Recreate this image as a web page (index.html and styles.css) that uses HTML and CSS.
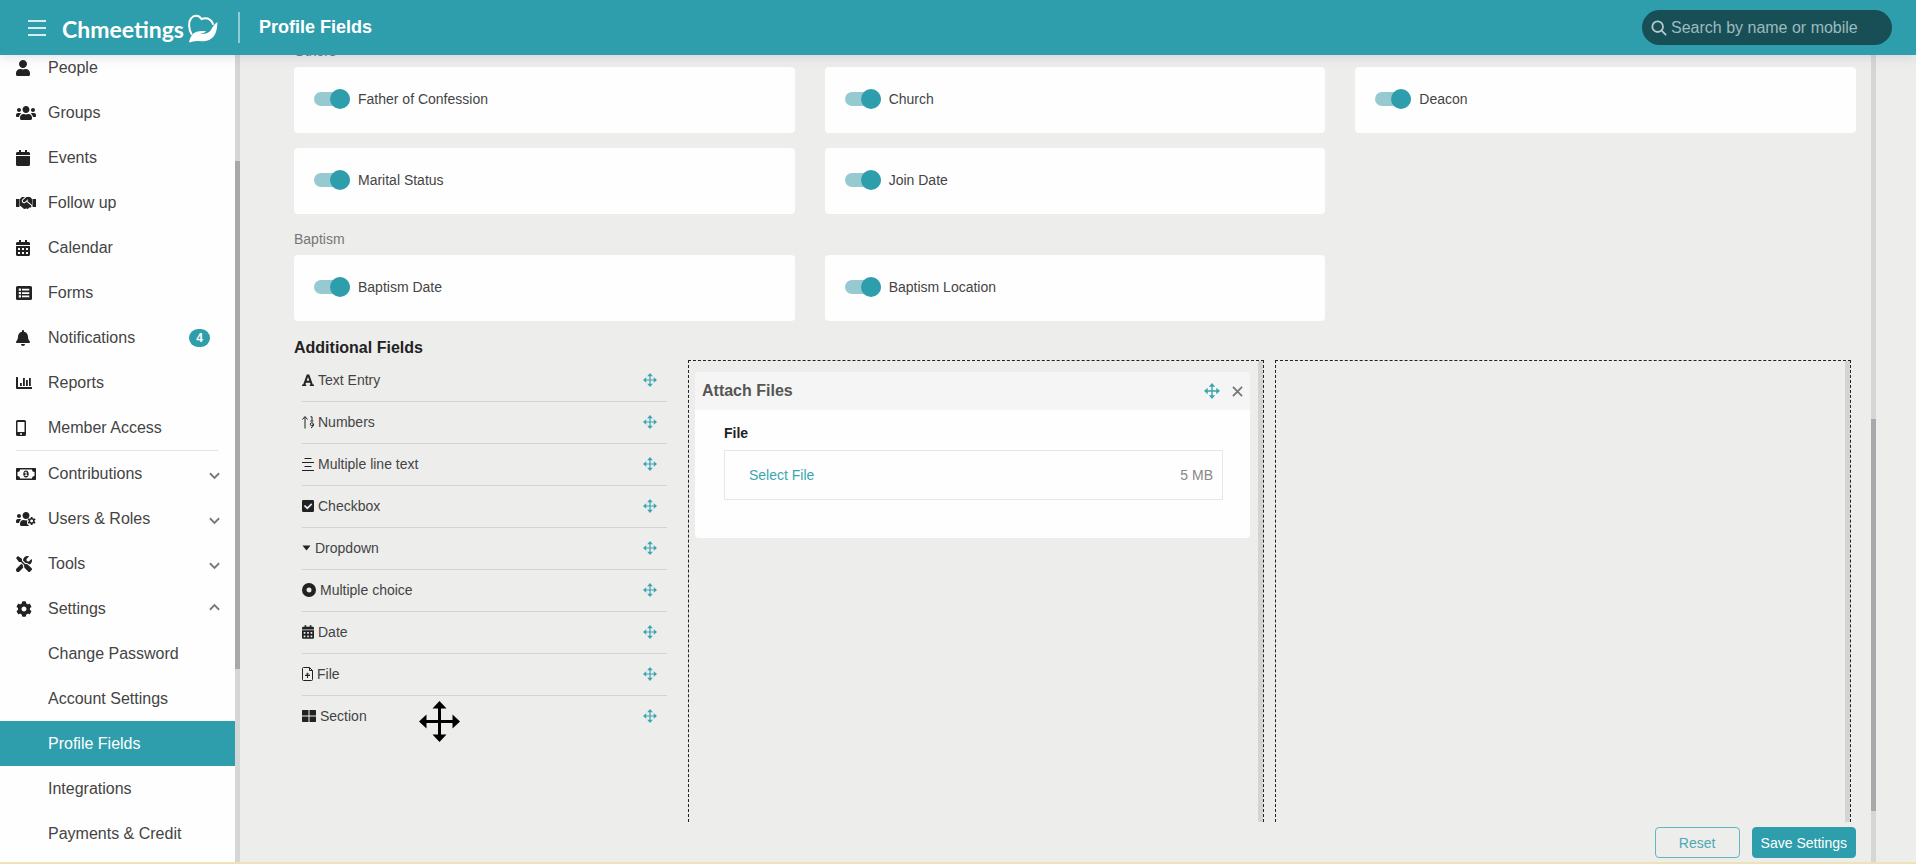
FILE: index.html
```html
<!DOCTYPE html>
<html lang="en">

<head>
    <meta charset="UTF-8">
    <meta name="viewport" content="width=device-width, initial-scale=1.0">
    <title>Profile Fields - Chmeetings</title>
    <link rel="stylesheet" href="styles.css">
</head>

<body>
    <!-- Icon sprite -->
    <svg class="sprite" aria-hidden="true">
        <symbol id="i-user" viewBox="0 0 448 512"><path d="M224 256c70.700 0 128-57.300 128-128S294.700 0 224 0 96 57.300 96 128s57.300 128 128 128zm89.600 32h-16.700c-22.200 10.200-46.900 16-72.900 16s-50.600-5.800-72.900-16h-16.700C60.200 288 0 348.200 0 422.400V464c0 26.500 21.500 48 48 48h352c26.500 0 48-21.500 48-48v-41.600c0-74.200-60.200-134.400-134.400-134.400z"/></symbol>
        <symbol id="i-users" viewBox="0 0 640 512"><path d="M96 224c35.300 0 64-28.700 64-64s-28.700-64-64-64-64 28.700-64 64 28.700 64 64 64zm448 0c35.300 0 64-28.700 64-64s-28.700-64-64-64-64 28.700-64 64 28.700 64 64 64zm32 32h-64c-17.600 0-33.500 7.100-45.100 18.600 40.300 22.100 68.900 62 75.100 109.400h66c17.700 0 32-14.300 32-32v-32c0-35.300-28.700-64-64-64zm-256 0c61.900 0 112-50.100 112-112S381.900 32 320 32 208 82.100 208 144s50.100 112 112 112zm76.800 32h-8.300c-20.800 10-43.900 16-68.500 16s-47.600-6-68.500-16h-8.300C179.600 288 128 339.600 128 403.200V432c0 26.500 21.500 48 48 48h288c26.500 0 48-21.500 48-48v-28.800c0-63.600-51.600-115.200-115.200-115.200zm-223.700-13.400C161.500 263.100 145.600 256 128 256H64c-35.300 0-64 28.700-64 64v32c0 17.700 14.300 32 32 32h65.900c6.300-47.400 34.900-87.300 75.200-109.400z"/></symbol>
        <symbol id="i-calendar" viewBox="0 0 448 512"><path d="M12 192h424c6.600 0 12 5.400 12 12v260c0 26.500-21.500 48-48 48H48c-26.500 0-48-21.500-48-48V204c0-6.600 5.400-12 12-12zm436-44v-36c0-26.500-21.500-48-48-48h-48V12c0-6.600-5.400-12-12-12h-40c-6.600 0-12 5.400-12 12v52H160V12c0-6.600-5.400-12-12-12h-40c-6.600 0-12 5.400-12 12v52H48C21.500 64 0 85.500 0 112v36c0 6.600 5.400 12 12 12h424c6.600 0 12-5.400 12-12z"/></symbol>
        <symbol id="i-calendar-alt" viewBox="0 0 448 512"><path fill-rule="evenodd" d="M0 192h448v272c0 26.500-21.500 48-48 48H48c-26.500 0-48-21.500-48-48zM64 256v64h64v-64zM192 256v64h64v-64zM320 256v64h64v-64zM64 384v64h64v-64zM192 384v64h64v-64zM320 384v64h64v-64zM448 160v-48c0-26.500-21.500-48-48-48h-48V12c0-6.600-5.400-12-12-12h-40c-6.600 0-12 5.400-12 12v52H160V12c0-6.600-5.400-12-12-12h-40c-6.600 0-12 5.400-12 12v52H48C21.500 64 0 85.500 0 112v48z"/></symbol>
        <symbol id="i-handshake" viewBox="0 0 640 512"><path d="M434.700 64h-85.900c-8 0-15.700 3-21.600 8.400l-98.300 90c-.1.1-.2.3-.3.4-16.600 15.600-16.300 40.500-2.100 56 12.700 13.900 39.400 17.600 56.100 2.700.1-.1.3-.1.4-.2l79.900-73.200c6.500-5.900 16.700-5.500 22.600 1 6 6.500 5.500 16.600-1 22.600l-26.100 23.900L504 313.800c2.900 2.400 5.500 5 7.900 7.700V128l-54.600-54.600c-5.900-6-14.100-9.400-22.600-9.400zM526 128.200v223.900c0 17.700 14.300 32 32 32h82V128.200H526zM0 384h82c17.700 0 32-14.300 32-32V128.200H0V384zm483.900-45.300L334.600 217.500l-30 27.500c-29.700 27.100-75.200 24.500-101.700-4.400-26.900-29.400-24.800-74.900 4.400-101.700L289.100 64h-83.800c-8.500 0-16.600 3.400-22.600 9.400L128 128v223.900h18.300l90.500 81.900c27.400 22.300 67.700 18.100 90-9.300l.2-.2 17.900 15.500c15.900 13 39.400 10.500 52.300-5.400l31.400-38.600 5.400 4.400c13.700 11.100 33.900 9.100 45-4.700l9.500-11.700c11.200-13.800 9.100-33.900-4.600-45.100z"/></symbol>
        <symbol id="i-list" viewBox="0 0 512 512"><path fill-rule="evenodd" d="M48 32h416a48 48 0 0 1 48 48v352a48 48 0 0 1-48 48H48a48 48 0 0 1-48-48V80a48 48 0 0 1 48-48zM88 112h72v72H88zM192 120h232v56H192zM88 220h72v72H88zM192 228h232v56H192zM88 328h72v72H88zM192 336h232v56H192z"/></symbol>
        <symbol id="i-bell" viewBox="0 0 448 512"><path d="M224 512c35.320 0 63.970-28.650 63.970-64H160.030c0 35.350 28.650 64 63.970 64zm215.390-149.710c-19.320-20.760-55.470-51.990-55.470-154.290 0-77.700-54.480-139.900-127.940-155.160V32c0-17.670-14.320-32-31.980-32s-31.980 14.330-31.980 32v20.840C118.560 68.100 64.080 130.300 64.080 208c0 102.300-36.150 133.530-55.470 154.290-6 6.450-8.660 14.160-8.610 21.710.11 16.400 12.980 32 32.100 32h383.800c19.120 0 32-15.600 32.100-32 .05-7.550-2.610-15.270-8.610-21.710z"/></symbol>
        <symbol id="i-chart" viewBox="0 0 512 512"><path d="M0 76q0-12 12-12h40q12 0 12 12v308h436q12 0 12 12v40q0 12-12 12H32q-32 0-32-32zM128 256h58v96h-58zM224 96h58v256h-58zM320 160h58v192h-58zM416 96h58v256h-58z"/></symbol>
        <symbol id="i-mobile" viewBox="0 0 320 512"><path fill-rule="evenodd" d="M48 0h224a48 48 0 0 1 48 48v416a48 48 0 0 1-48 48H48a48 48 0 0 1-48-48V48A48 48 0 0 1 48 0zM48 60v324h224V60zM160 480a32 32 0 1 0 0-64 32 32 0 0 0 0 64z"/></symbol>
        <symbol id="i-money" viewBox="0 0 640 512"><path fill-rule="evenodd" d="M24 64h592q24 0 24 24v336q0 24-24 24H24q-24 0-24-24V88q0-24 24-24zM128 112a80 80 0 0 1-80 80v128a80 80 0 0 1 80 80h384a80 80 0 0 1 80-80V192a80 80 0 0 1-80-80zM320 144c53 0 88 50 88 112s-35 112-88 112-88-50-88-112 35-112 88-112zm-48 152v24h96v-24h-28V184h-30l-38 20v24l32-10v78z"/></symbol>
        <symbol id="i-users-cog" viewBox="0 0 640 512"><path d="M96 224c35.300 0 64-28.700 64-64s-28.700-64-64-64-64 28.700-64 64 28.700 64 64 64zM320 256c61.900 0 112-50.100 112-112S381.900 32 320 32 208 82.100 208 144s50.100 112 112 112zM173 274.600C161.500 263.100 145.600 256 128 256H64c-35.300 0-64 28.700-64 64v32c0 17.700 14.300 32 32 32h65.900c6.300-47.400 34.900-87.300 75.100-109.400zM365 290c-14 8-29 14-45 14-24 0-48-6-68-16h-9C180 288 128 340 128 403v29c0 26 21 48 48 48h254c-50-30-80-60-80-110 0-30 5-55 15-80z"/><path fill-rule="evenodd" d="M474 192h52l8 42 24 13 41-15 26 45-32 29v28l32 29-26 45-41-15-24 13-8 42h-52l-8-42-24-13-41 15-26-45 32-29v-28l-32-29 26-45 41 15 24-13zm26 82a46 46 0 1 0 0 92 46 46 0 0 0 0-92z"/></symbol>
        <symbol id="i-tools" viewBox="0 0 512 512"><path d="M501.100 395.700L384 278.600c-23.100-23.100-57.600-27.600-85.400-13.900L192 158.100V96L64 0 0 64l96 128h62.100l106.600 106.600c-13.600 27.800-9.200 62.300 13.900 85.400l117.100 117.100c14.600 14.600 38.200 14.600 52.700 0l52.700-52.700c14.500-14.600 14.500-38.200 0-52.700zM331.700 225c28.300 0 54.900 11 74.900 31l19.400 19.400c15.800-6.900 30.800-16.500 43.800-29.500 37.100-37.100 49.700-89.300 37.900-136.700-2.200-9-13.500-12.100-20.100-5.500l-74.400 74.400-67.900-11.300L334 98.900l74.400-74.400c6.600-6.600 3.400-17.900-5.700-20.200-47.400-11.700-99.600.9-136.600 37.900-28.500 28.500-41.900 66.100-41.200 103.600l82.100 82.100c8.100-1.900 16.500-2.900 24.700-2.900zm-103.900 82l-56.700-56.700L18.700 402.800c-25 25-25 65.500 0 90.500s65.500 25 90.500 0l123.600-123.600c-7.600-19.900-9.900-41.600-5-62.700z"/></symbol>
        <symbol id="i-cog" viewBox="0 0 512 512"><path d="M487.400 315.700l-42.600-24.600c4.300-23.200 4.300-47 0-70.200l42.600-24.600c4.900-2.800 7.100-8.600 5.500-14-11.100-35.600-30-67.800-54.700-94.600-3.800-4.100-10-5.100-14.800-2.300L380.800 110c-17.900-15.400-38.500-27.300-60.800-35.100V25.800c0-5.600-3.900-10.500-9.400-11.700-36.700-8.200-74.300-7.800-109.200 0-5.500 1.200-9.400 6.100-9.400 11.700V75c-22.200 7.900-42.800 19.800-60.800 35.100L88.700 85.500c-4.900-2.800-11-1.900-14.800 2.300-24.700 26.700-43.600 58.900-54.700 94.600-1.700 5.400.6 11.200 5.500 14L67.300 221c-4.300 23.200-4.300 47 0 70.200l-42.600 24.600c-4.900 2.800-7.100 8.600-5.500 14 11.100 35.600 30 67.800 54.700 94.600 3.800 4.100 10 5.100 14.800 2.300l42.600-24.600c17.900 15.400 38.500 27.300 60.800 35.100v49.200c0 5.600 3.900 10.500 9.400 11.700 36.700 8.200 74.300 7.800 109.200 0 5.500-1.200 9.400-6.100 9.400-11.700v-49.200c22.200-7.900 42.800-19.800 60.800-35.100l42.600 24.600c4.900 2.800 11 1.900 14.800-2.300 24.700-26.700 43.600-58.900 54.700-94.600 1.500-5.500-.7-11.300-5.600-14.100zM256 336c-44.100 0-80-35.900-80-80s35.900-80 80-80 80 35.900 80 80-35.900 80-80 80z"/></symbol>
        <symbol id="i-chevron" viewBox="0 0 12 8"><path d="M1 1l5 5 5-5" fill="none" stroke="currentColor" stroke-width="2"/></symbol>
        <symbol id="i-move" viewBox="0 0 16 16"><path d="M8 0l3.200 3.700H8.700v3.600h3.600V4.800L16 8l-3.700 3.200V8.700H8.700v3.600h2.500L8 16l-3.200-3.700h2.500V8.700H3.700v2.500L0 8l3.700-3.200v2.500h3.600V3.700H4.800z"/></symbol>
        <symbol id="i-font" viewBox="0 0 448 448"><path fill-rule="evenodd" d="M178 16h92l134 372h32q12 0 12 12v32q0 12-12 12H300q-12 0-12-12v-32q0-12 12-12h24l-22-66H146l-22 66h24q12 0 12 12v32q0 12-12 12H12q-12 0-12-12v-32q0-12 12-12h32zM224 106l-48 144h96z"/></symbol>
        <symbol id="i-sort" viewBox="0 0 12 13"><path d="M3 13V1.500M.5 4L3 1l2.500 3M8.500 1.300H10v4M8.300 5.500h3" fill="none" stroke="currentColor"/><path d="M9.800 7.200a1.500 1.500 0 1 0 0 3 1.500 1.500 0 0 0 0-3zM11.300 8.500v2L9 12.500" fill="none" stroke="currentColor"/></symbol>
        <symbol id="i-align" viewBox="0 0 12 14"><path d="M2.500 1.500h7M0 5.500h12M2.500 9.500h7M0 13.500h12" fill="none" stroke="currentColor"/></symbol>
        <symbol id="i-check" viewBox="0 0 12 12"><path fill-rule="evenodd" d="M1.300 0h9.400A1.300 1.300 0 0 1 12 1.300v9.400a1.300 1.300 0 0 1-1.300 1.300H1.300A1.300 1.300 0 0 1 0 10.700V1.300A1.300 1.300 0 0 1 1.300 0zM5.300 9.400l5-5-1.100-1.200-3.900 3.900L3 4.900 1.800 6.100z"/></symbol>
        <symbol id="i-caret" viewBox="0 0 9 6"><path d="M.5.500h8L4.500 5.500z"/></symbol>
        <symbol id="i-dot" viewBox="0 0 14 14"><path fill-rule="evenodd" d="M7 0a7 7 0 1 0 0 14A7 7 0 0 0 7 0zm0 4.500a2.500 2.500 0 1 1 0 5 2.500 2.500 0 0 1 0-5z"/></symbol>
        <symbol id="i-file" viewBox="0 0 11 14"><path d="M1.500.5h6l3 3v9a1 1 0 0 1-1 1h-8a1 1 0 0 1-1-1v-11a1 1 0 0 1 1-1zM7.500.5v3h3M5.500 11V6.500M3 8.500h5M3.800 7.700l1.700-1.700 1.700 1.700" fill="none" stroke="currentColor"/></symbol>
        <symbol id="i-grid" viewBox="0 0 14 12"><path d="M.5 0h6v5.500H0V.5zM7.500 0h6l.5.500v5H7.500zM0 6.500h6.500V12H.5l-.5-.5zM7.500 6.500H14v5l-.5.500h-6z"/></symbol>
    </svg>

    <header class="topbar">
        <button class="menu-btn" type="button" aria-label="Toggle menu"><span></span><span></span><span></span></button>
        <a class="logo" href="#">Chmeetings<svg viewBox="0 0 30 30" aria-hidden="true">
                <path d="M3.500 20C1 16 0 8 3 4.500c3-4 8-3.500 10.500.5 3-1 6-1 8 .5 2 1 3 3 3.500 4.500" fill="none" stroke="#fff" stroke-width="2" stroke-linecap="round"/>
                <path d="M1 28.500c1-5 3-9 7-10.500 4-1.500 8-1 10-1-1 2-4 2.500-6 3 5 .5 9-1 11-4 1.500-3 3-6 6.500-8C29 16 28 22 22 25.500c-5 3-9 1-13 1.500-3 .5-5 .5-8 1.500z" fill="#fff"/>
            </svg></a>
        <h1 class="page-title">Profile Fields</h1>
        <label class="search">
            <svg viewBox="0 0 18 18" aria-hidden="true"><circle cx="7.500" cy="7.500" r="6"/><path d="M12 12l5 5"/></svg>
            <input type="search" placeholder="Search by name or mobile" aria-label="Search by name or mobile">
        </label>
    </header>

    <div class="layout">
        <nav class="sidebar">
            <ul class="menu">
                <li><a href="#"><svg class="w14"><use href="#i-user"/></svg>People</a></li>
                <li><a href="#"><svg class="w20"><use href="#i-users"/></svg>Groups</a></li>
                <li><a href="#"><svg class="w14"><use href="#i-calendar"/></svg>Events</a></li>
                <li><a href="#"><svg class="w20"><use href="#i-handshake"/></svg>Follow up</a></li>
                <li><a href="#"><svg class="w14"><use href="#i-calendar-alt"/></svg>Calendar</a></li>
                <li><a href="#"><svg class="w16"><use href="#i-list"/></svg>Forms</a></li>
                <li><a href="#"><svg class="w14"><use href="#i-bell"/></svg>Notifications<span class="badge">4</span></a></li>
                <li><a href="#"><svg class="w16"><use href="#i-chart"/></svg>Reports</a></li>
                <li><a href="#"><svg class="w10"><use href="#i-mobile"/></svg>Member Access</a></li>
                <li class="divider"></li>
                <li><a href="#"><svg class="w20"><use href="#i-money"/></svg>Contributions<svg class="chevron"><use href="#i-chevron"/></svg></a></li>
                <li><a href="#"><svg class="w20"><use href="#i-users-cog"/></svg>Users &amp; Roles<svg class="chevron"><use href="#i-chevron"/></svg></a></li>
                <li><a href="#"><svg class="w16"><use href="#i-tools"/></svg>Tools<svg class="chevron"><use href="#i-chevron"/></svg></a></li>
                <li><a href="#"><svg class="w16"><use href="#i-cog"/></svg>Settings<svg class="chevron open"><use href="#i-chevron"/></svg></a></li>
                <li><a class="sub" href="#">Change Password</a></li>
                <li><a class="sub" href="#">Account Settings</a></li>
                <li><a class="sub active" href="#">Profile Fields</a></li>
                <li><a class="sub" href="#">Integrations</a></li>
                <li><a class="sub" href="#">Payments &amp; Credit</a></li>
            </ul>
        </nav>
        <div class="scrollbar side-scroll"><div class="thumb"></div></div>

        <main class="main">
            <div class="scroller">
                <h2 class="group-title">Others</h2>
                <div class="cards">
                    <label class="card"><input type="checkbox" class="switch" checked>Father of Confession</label>
                    <label class="card"><input type="checkbox" class="switch" checked>Church</label>
                    <label class="card"><input type="checkbox" class="switch" checked>Deacon</label>
                    <label class="card"><input type="checkbox" class="switch" checked>Marital Status</label>
                    <label class="card"><input type="checkbox" class="switch" checked>Join Date</label>
                </div>
                <h2 class="group-title">Baptism</h2>
                <div class="cards">
                    <label class="card"><input type="checkbox" class="switch" checked>Baptism Date</label>
                    <label class="card"><input type="checkbox" class="switch" checked>Baptism Location</label>
                </div>

                <h2 class="section-title">Additional Fields</h2>
                <div class="builder">
                    <ul class="field-types">
                        <li><svg class="t12"><use href="#i-font"/></svg>Text Entry<svg class="move"><use href="#i-move"/></svg></li>
                        <li><svg class="t12"><use href="#i-sort"/></svg>Numbers<svg class="move"><use href="#i-move"/></svg></li>
                        <li><svg class="t12"><use href="#i-align"/></svg>Multiple line text<svg class="move"><use href="#i-move"/></svg></li>
                        <li><svg class="t12"><use href="#i-check"/></svg>Checkbox<svg class="move"><use href="#i-move"/></svg></li>
                        <li><svg class="t9"><use href="#i-caret"/></svg>Dropdown<svg class="move"><use href="#i-move"/></svg></li>
                        <li><svg class="t14"><use href="#i-dot"/></svg>Multiple choice<svg class="move"><use href="#i-move"/></svg></li>
                        <li><svg class="t12"><use href="#i-calendar-alt"/></svg>Date<svg class="move"><use href="#i-move"/></svg></li>
                        <li><svg class="t11"><use href="#i-file"/></svg>File<svg class="move"><use href="#i-move"/></svg></li>
                        <li><svg class="t14"><use href="#i-grid"/></svg>Section<svg class="move"><use href="#i-move"/></svg></li>
                    </ul>
                    <div class="dropzone">
                        <section class="widget">
                            <div class="widget-head">
                                <h3>Attach Files</h3>
                                <svg class="move"><use href="#i-move"/></svg>
                                <button class="close" type="button" aria-label="Remove"><svg viewBox="0 0 12 12"><path d="M1 1l10 10M11 1L1 11"/></svg></button>
                            </div>
                            <div class="widget-body">
                                <p class="field-label">File</p>
                                <div class="file-box">
                                    <button class="select-file" type="button">Select File</button>
                                    <span>5 MB</span>
                                </div>
                            </div>
                        </section>
                    </div>
                    <div class="dropzone"></div>
                </div>
            </div>
            <footer class="actions">
                <button class="btn btn-outline" type="button">Reset</button>
                <button class="btn btn-primary" type="button">Save Settings</button>
            </footer>
        </main>
        <div class="scrollbar main-scroll"><div class="thumb"></div></div>
        <div class="gutter"></div>
    </div>

    <svg class="cursor" viewBox="0 0 41 41" aria-hidden="true"><path d="M20.500 0l7 7.500h-5.500v11.500h11.500v-5.500l7.500 7-7.500 7v-5.500h-11.500v11.500h5.500l-7 7.500-7-7.500h5.500v-11.500h-11.500v5.500l-7.500-7 7.500-7v5.500h11.500v-11.500h-5.500z"/></svg>
</body>

</html>
```

FILE: styles.css
```css
* {
    box-sizing: border-box;
}

body {
    margin: 0;
    height: 100vh;
    display: flex;
    flex-direction: column;
    overflow: hidden;
    font-family: "Liberation Sans", Arial, sans-serif;
    font-size: 14px;
    line-height: 20px;
    color: #444;
    background: #ededec;
    border-bottom: 2px solid #efe2b8;
}

h1,
h2,
h3,
p,
ul {
    margin: 0;
    padding: 0;
}

ul {
    list-style: none;
}

a {
    color: inherit;
    text-decoration: none;
}

button {
    font: inherit;
    cursor: pointer;
}

svg {
    fill: currentColor;
    flex: none;
}

.sprite {
    position: absolute;
    width: 0;
    height: 0;
}

/* Top bar */
.topbar {
    position: relative;
    z-index: 2;
    flex: none;
    height: 55px;
    padding: 0 24px 0 28px;
    display: flex;
    align-items: center;
    background: #2e9eac;
    color: #fff;
    box-shadow: 0 1px 12px rgba(80, 90, 120, 0.2);
}

.menu-btn {
    width: 18px;
    padding: 0;
    border: 0;
    background: none;
    display: grid;
    gap: 5px;
}

.menu-btn span {
    height: 2px;
    background: #d5edef;
}

.logo {
    display: flex;
    align-items: center;
    gap: 4px;
    margin-left: 16px;
    padding-top: 2px;
    font-family: Lato, sans-serif;
    font-size: 23px;
    font-weight: bold;
    line-height: 32px;
}

.logo svg {
    width: 30px;
    height: 30px;
}

.page-title {
    margin-left: 20px;
    padding-left: 19px;
    border-left: 2px solid #8fcdd4;
    font-size: 18px;
    line-height: 31px;
}

.search {
    margin-left: auto;
    width: 250px;
    height: 35px;
    padding: 0 9px;
    display: flex;
    align-items: center;
    gap: 4px;
    border-radius: 18px;
    background: #184f56;
}

.search svg {
    width: 16px;
    height: 16px;
    fill: none;
    stroke: #b5cbce;
    stroke-width: 2;
}

.search input {
    flex: 1;
    min-width: 0;
    padding: 0;
    border: 0;
    outline: none;
    background: none;
    color: #fff;
    font: 16px "Liberation Sans", Arial, sans-serif;
}

.search input::placeholder {
    color: #9dbabe;
}

/* Sidebar */
.layout {
    flex: 1;
    min-height: 0;
    display: flex;
}

.sidebar {
    flex: none;
    width: 235px;
    overflow: hidden;
    background: #fefefe;
    font-size: 16px;
}

.menu {
    margin-top: -10px;
}

.menu a {
    height: 45px;
    padding: 0 15px 0 16px;
    display: flex;
    align-items: center;
}

.menu svg {
    height: 16px;
    color: #222;
}

.w10 {
    width: 10px;
    margin-right: 22px;
}

.w14 {
    width: 14px;
    margin-right: 18px;
}

.w16 {
    width: 16px;
    margin-right: 16px;
}

.w20 {
    width: 20px;
    margin-right: 12px;
}

.menu .chevron {
    width: 11px;
    height: 8px;
    margin: 4px 0 0 auto;
    color: #777;
}

.menu .chevron.open {
    transform: rotate(180deg);
    margin: 0 0 4px auto;
}

.menu a.sub {
    padding-left: 48px;
}

.menu a.active {
    background: #2e9eac;
    color: #fff;
}

.divider {
    height: 1px;
    margin: 0 17px 0 16px;
    background: #e3e3e3;
}

.badge {
    width: 21px;
    margin: 0 10px 0 auto;
    border-radius: 9px;
    background: #2e9eac;
    color: #fff;
    font-size: 12px;
    font-weight: bold;
    line-height: 18px;
    text-align: center;
}

.scrollbar {
    flex: none;
    width: 5px;
    background: #d5d6d6;
}

.thumb {
    background: #a9a9ab;
}

.side-scroll .thumb {
    height: 63%;
    margin-top: 106px;
}

.main-scroll .thumb {
    height: 392px;
    margin-top: 364px;
}

.gutter {
    flex: none;
    width: 40px;
}

/* Content */
.main {
    flex: 1;
    min-width: 0;
    padding: 0 15px 0 54px;
    display: flex;
    flex-direction: column;
}

.scroller {
    flex: 1;
    min-height: 0;
    overflow: hidden;
    display: flex;
    flex-direction: column;
}

.group-title {
    margin: 15px 0 6px;
    color: #777;
    font-size: 14px;
    font-weight: normal;
}

.group-title:first-child {
    margin-top: -14px;
}

.cards {
    display: grid;
    grid-template-columns: repeat(3, 1fr);
    gap: 15px 30px;
}

.card {
    height: 66px;
    padding: 0 20px 2px;
    display: flex;
    align-items: center;
    gap: 8px;
    border-radius: 4px;
    background: #fefefe;
}

.switch {
    appearance: none;
    position: relative;
    width: 36px;
    height: 14px;
    margin: 0;
    border-radius: 7px;
    background: #ccc;
}

.switch::after {
    content: '';
    position: absolute;
    top: -3px;
    left: 0;
    width: 20px;
    height: 20px;
    border-radius: 50%;
    background: #fff;
}

.switch:checked {
    background: #96cad0;
}

.switch:checked::after {
    left: 16px;
    background: #2e9eac;
}

.section-title {
    margin: 17px 0 2px;
    color: #222;
    font-size: 16px;
}

/* Form builder */
.builder {
    flex: 1;
    display: grid;
    grid-template-columns: 383px 1fr 1fr;
    gap: 11px;
    padding-right: 5px;
}

.field-types {
    padding: 0 10px 0 8px;
}

.field-types li {
    height: 42px;
    padding: 0 10px 2px 0;
    display: flex;
    align-items: center;
    gap: 4px;
    border-bottom: 1px solid #cfd4d4;
}

.field-types li:last-child {
    border-bottom-color: transparent;
}

.field-types svg {
    height: 14px;
    color: #222;
}

.t9 {
    width: 9px;
}

.t11 {
    width: 11px;
}

.t12 {
    width: 12px;
}

.t14 {
    width: 14px;
}

.builder .move {
    width: 14px;
    height: 14px;
    margin-left: auto;
    color: #3ba5b1;
}

.dropzone {
    padding: 11px 7px 0 6px;
    border: 1px dashed #222;
    border-bottom: 0;
    background: linear-gradient(#d3d5d5, #d3d5d5) right / 5px 100% no-repeat;
}

.widget {
    margin-right: 6px;
    border-radius: 4px;
    overflow: hidden;
    background: #fefefe;
}

.widget-head {
    height: 38px;
    padding: 0 7px;
    display: flex;
    align-items: center;
    gap: 12px;
    background: #f5f5f5;
}

.widget-head h3 {
    color: #555;
    font-size: 16px;
}

.builder .widget-head .move {
    width: 16px;
    height: 16px;
}

.close {
    width: 11px;
    height: 11px;
    padding: 0;
    border: 0;
    background: none;
    color: #777;
    display: flex;
}

.close svg {
    width: 11px;
    height: 11px;
    stroke: currentColor;
    stroke-width: 2;
}

.widget-body {
    padding: 13px 27px 38px 29px;
}

.field-label {
    margin-bottom: 7px;
    color: #222;
    font-weight: bold;
}

.file-box {
    height: 50px;
    padding: 0 9px 0 24px;
    display: flex;
    align-items: center;
    justify-content: space-between;
    border: 1px solid #e6e7ec;
    color: #888;
}

.select-file {
    padding: 0;
    border: 0;
    background: none;
    color: #3aa6b2;
}

/* Footer buttons */
.actions {
    flex: none;
    padding: 5px 0 4px;
    display: flex;
    justify-content: flex-end;
    gap: 12px;
}

.btn {
    height: 31px;
    padding: 0 8px;
    border: 1px solid #2e9eac;
    border-radius: 4px;
}

.btn-outline {
    width: 85px;
    border-color: #62b7c0;
    background: none;
    color: #4fa9b3;
}

.btn-primary {
    background: #2e9eac;
    color: #fff;
}

/* Drag pointer floating over the page */
.cursor {
    position: absolute;
    top: 701px;
    left: 419px;
    z-index: 3;
    width: 41px;
    height: 41px;
    fill: #000;
}
```
